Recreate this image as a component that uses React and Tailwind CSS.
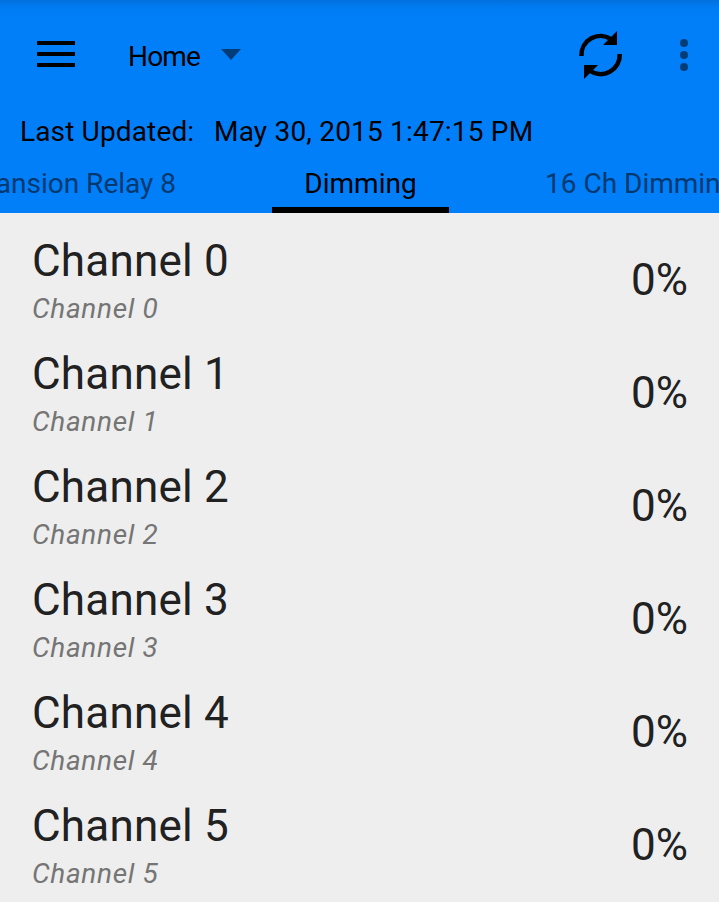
const channels = [0, 1, 2, 3, 4, 5];

function MenuIcon() {
  return (
    <div className="ml-[37px] mt-[41px] flex h-[26px] w-[38px] flex-col justify-between">
      <span className="h-1 bg-black" />
      <span className="h-1 bg-black" />
      <span className="h-1 bg-black" />
    </div>
  );
}

function RefreshIcon() {
  return (
    <svg className="ml-auto mt-[30px] h-[50px] w-[46px]" viewBox="577 30 46 50">
      <path d="M581.4 56A19.1 19.1 0 0 1 611.5 39.5M619.7 54A19.1 19.1 0 0 1 589.5 70.5" fill="none" stroke="#000" strokeWidth="4.6" />
      <path d="M617 31v14h-14zM584 79V65h14z" />
    </svg>
  );
}

export default function App() {
  return (
    <div className="h-[902px] w-[719px] overflow-hidden bg-[#eeeeee] font-['Roboto',sans-serif] text-[#212121]">
      <header className="flex h-[213px] flex-col bg-[#007ff9] bg-[linear-gradient(to_bottom,#0070dc_0px,#0077ea_4px,#007cf3_9px,#007ff9_18px)] text-[28px] leading-[34px] text-black">
        <div className="flex h-[115px] items-start">
          <MenuIcon />
          <span className="ml-[53px] mt-10 w-[73px] whitespace-nowrap tracking-[-0.8px]">Home</span>
          <svg className="ml-5 mt-[49px] h-[11px] w-5" viewBox="0 0 20 11">
            <path d="M0 0h20L10 11z" fill="#003c77" />
          </svg>
          <RefreshIcon />
          <div className="ml-[57px] mr-[31px] mt-[39px] flex w-2 flex-col gap-1">
            <span className="size-2 rounded-full bg-[#003c77]" />
            <span className="size-2 rounded-full bg-[#003c77]" />
            <span className="size-2 rounded-full bg-[#003c77]" />
          </div>
        </div>
        <div className="flex h-[52px] whitespace-pre pl-5">
          <span className="w-[194px] tracking-[0.15px]">Last Updated:</span>
          <span className="tracking-[0.2px]">May 30, 2015 1:47:15 PM</span>
        </div>
        <nav className="flex h-[46px] whitespace-nowrap">
          <div className="flex w-[272px] shrink-0 justify-end pr-24 text-[#003870]">Expansion Relay 8</div>
          <div className="w-[177px] shrink-0 border-b-[6px] border-black text-center">Dimming</div>
          <div className="ml-24 shrink-0 text-[#003870]">16 Ch Dimming</div>
        </nav>
      </header>
      <main>
        {channels.map((n) => (
          <div key={n} className="flex h-[113px] justify-between pl-8 pr-[31px]">
            <div className="flex flex-col gap-[5px] pt-[22px]">
              <span className="text-[44px] leading-[52px] tracking-[0.2px]">Channel {n}</span>
              <span className="text-[28px] italic leading-[33px] tracking-[0.65px] text-[#757575]">Channel {n}</span>
            </div>
            <span className="pt-[41px] text-[44px] leading-[52px]">0%</span>
          </div>
        ))}
      </main>
    </div>
  );
}
